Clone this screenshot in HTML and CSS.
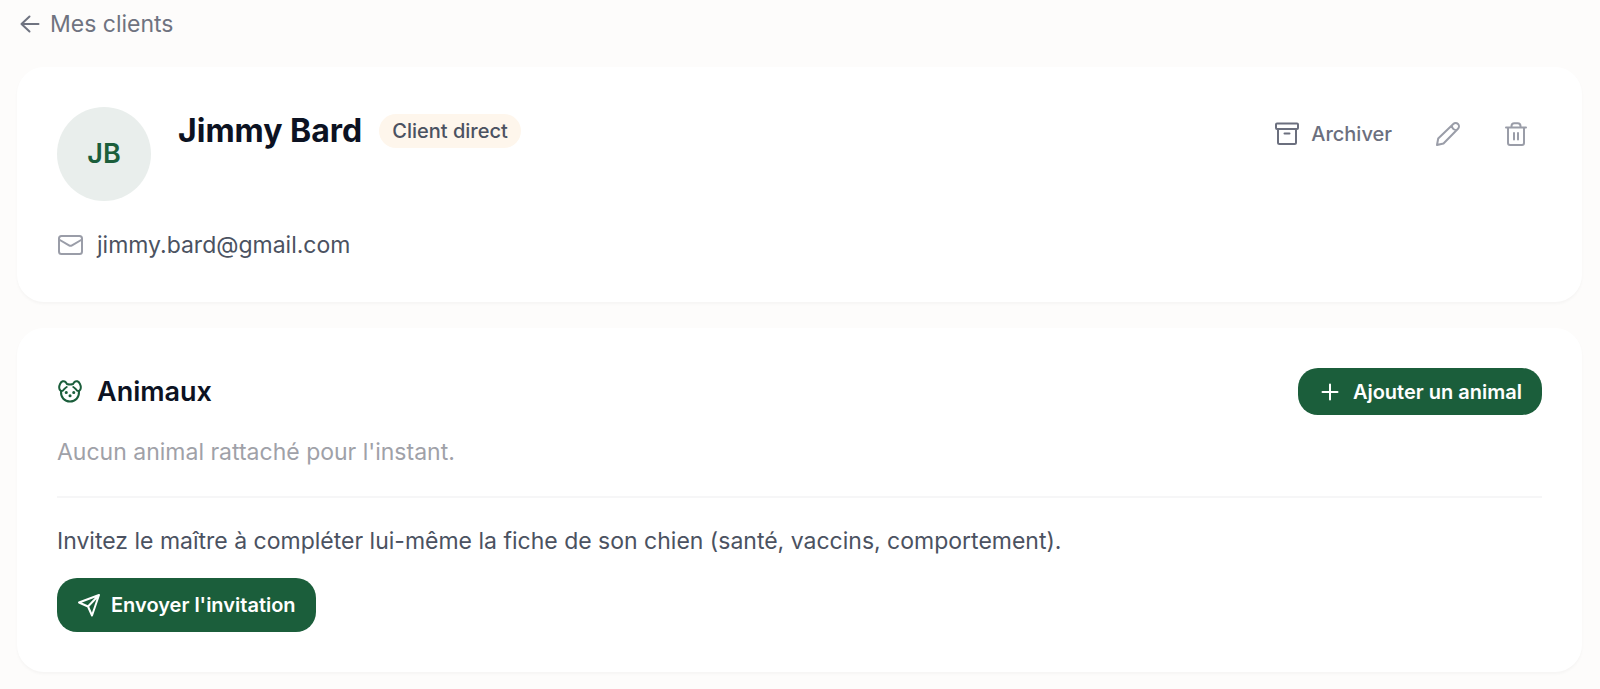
FILE: index.html
```html
<!DOCTYPE html>
<html lang="fr">
<head>
<meta charset="utf-8">
<meta name="viewport" content="width=device-width, initial-scale=1">
<title>Jimmy Bard – Mes clients</title>
<link rel="stylesheet" href="styles.css">
</head>
<body>
<main class="page">
  <nav class="breadcrumb">
    <a class="back-link" href="#clients">
      <svg class="icon icon-back" viewBox="0 0 20 20" aria-hidden="true"><path d="M9.500 17.500L1.500 10l8-7.500M1.500 10h17"/></svg>
      <span>Mes clients</span>
    </a>
  </nav>

  <section class="card">
    <header class="client-header">
      <div class="avatar">JB</div>
      <div class="identity">
        <h1 class="client-name">Jimmy Bard</h1>
        <span class="badge">Client direct</span>
      </div>
      <div class="actions">
        <button class="ghost-button" type="button">
          <svg class="icon icon-archive" viewBox="0 0 24 24" aria-hidden="true"><rect x="1" y="1.500" width="22" height="5.500" rx="1"/><path d="M3 7v13.500a1.500 1.500 0 0 0 1.500 1.500h15a1.500 1.500 0 0 0 1.500-1.500V7M9.500 11.500h5"/></svg>
          <span>Archiver</span>
        </button>
        <button class="icon-button" type="button" aria-label="Modifier">
          <svg class="icon" viewBox="0 0 24 24" aria-hidden="true"><path d="M1 23l1.200-6.500L17.300 2a3.200 3.200 0 0 1 4.700 4.700L7.500 21.500zM15.800 3.500c.3 2.700 2 4.400 4.700 4.700"/></svg>
        </button>
        <button class="icon-button" type="button" aria-label="Supprimer">
          <svg class="icon" viewBox="0 0 24 24" aria-hidden="true"><path d="M2 5.500h20M4 5.500v15.500a2 2 0 0 0 2 2h12a2 2 0 0 0 2-2v-15.500M7.500 5.500V4A2.800 2.800 0 0 1 10.300 1.200h3.400A2.800 2.800 0 0 1 16.500 4v1.500M10 11v6.500M14 11v6.500"/></svg>
        </button>
      </div>
    </header>
    <a class="contact" href="mailto:jimmy.bard@gmail.com">
      <svg class="icon icon-mail" viewBox="0 0 26 26" aria-hidden="true"><rect x="2" y="4" width="23" height="18" rx="2.500"/><path d="M2 7.500l10 5.900a3 3 0 0 0 3 0L25 7.500"/></svg>
      <span>jimmy.bard@gmail.com</span>
    </a>
  </section>

  <section class="card">
    <header class="section-header">
      <h2 class="section-title">
        <svg class="icon icon-dog" viewBox="0 0 26 26" aria-hidden="true"><path d="M10 5C9 3 7.500 1.800 5.700 2.300 3.500 3 2 6.500 2.200 8.800 2.400 11.500 4.500 12.800 6 11.500 7.300 10.300 8 9 9.700 8M16 5c1-2 2.500-3.200 4.300-2.700 2.200.7 3.700 4.200 3.500 6.500-.2 2.700-2.300 4-3.800 2.700-1.300-1.200-2-2.500-3.700-3.500M10 5c2 .7 4 .7 6 0M4 12.200c-.3 6.300 3.500 10.300 9 10.300s9.300-4 9-10.300"/><path class="dots" d="M9.200 13.500h.1M16.700 13.500h.1M13 16.800h.1"/></svg>
        Animaux
      </h2>
      <button class="primary-button add-button" type="button">
        <svg class="icon icon-plus" viewBox="0 0 18 18" aria-hidden="true"><path d="M9 1.500v15M1.500 9h15"/></svg>
        <span>Ajouter un animal</span>
      </button>
    </header>
    <p class="empty-text">Aucun animal rattaché pour l'instant.</p>
    <div class="invite">
      <p class="invite-text">Invitez le maître à compléter lui-même la fiche de son chien (santé, vaccins, comportement).</p>
      <button class="primary-button invite-button" type="button">
        <svg class="icon icon-send" viewBox="0 0 24 24" aria-hidden="true"><path d="M22 2L2 9.500l9 4 4 9zM22 2L11 13.500"/></svg>
        <span>Envoyer l'invitation</span>
      </button>
    </div>
  </section>
</main>
</body>
</html>
```

FILE: styles.css
```css
* {
  box-sizing: border-box;
}

body {
  margin: 0;
  background: #fdfcfb;
  color: #4b5261;
  font-family: Inter, "Liberation Sans", sans-serif;
  font-size: 23px;
  line-height: 34px;
}

h1,
h2,
p {
  margin: 0;
}

a {
  color: inherit;
  text-decoration: none;
}

button {
  border: 0;
  background: none;
  font: inherit;
  cursor: pointer;
}

.page {
  display: flex;
  flex-direction: column;
  gap: 26px;
  padding: 7px 18px 17px 17px;
}

.icon {
  flex: none;
  width: 24px;
  height: 24px;
  fill: none;
  stroke: currentColor;
  stroke-width: 2;
  stroke-linecap: round;
  stroke-linejoin: round;
}

.breadcrumb {
  display: flex;
}

.back-link {
  display: flex;
  align-items: center;
  gap: 10px;
  padding-left: 3px;
  color: #6f7380;
}

.icon-back {
  width: 20px;
  height: 20px;
}

.card {
  padding: 40px;
  border-radius: 27px;
  background: #fff;
  box-shadow: 0 2px 3px rgb(15 23 42 / 3%);
}

.client-header {
  display: flex;
  align-items: flex-start;
}

.avatar {
  display: grid;
  place-items: center;
  width: 94px;
  height: 94px;
  margin-right: 27px;
  border-radius: 50%;
  background: #e9eeec;
  color: #1b5e3b;
  font-size: 27px;
  font-weight: 600;
}

.identity {
  display: flex;
  flex: 1;
  flex-wrap: wrap;
  align-items: center;
  gap: 17px;
}

.client-name {
  color: #0c1222;
  font-size: 32px;
  font-weight: 700;
  line-height: 48px;
}

.badge {
  padding: 0 13px;
  border-radius: 17px;
  background: #fef6ec;
  font-size: 20px;
  font-weight: 500;
}

.actions {
  display: flex;
  gap: 16px;
}

.ghost-button,
.icon-button {
  display: flex;
  align-items: center;
  height: 54px;
  padding: 0 14px;
}

.ghost-button {
  gap: 12px;
  color: #6b6f7e;
  font-size: 20px;
  font-weight: 500;
}

.icon-button {
  color: #9a9da8;
}

.contact {
  display: flex;
  align-items: center;
  gap: 14px;
  margin-top: 27px;
}

.icon-mail {
  width: 26px;
  height: 26px;
  color: #9a9da8;
}

.section-header {
  display: flex;
  align-items: center;
  justify-content: space-between;
}

.section-title {
  display: flex;
  align-items: center;
  gap: 14px;
  color: #0c1222;
  font-size: 27px;
  font-weight: 600;
}

.icon-dog {
  width: 26px;
  height: 26px;
  color: #1b5e3b;
}

.dots {
  stroke-width: 3;
}

.primary-button {
  display: flex;
  align-items: center;
  border-radius: 20px;
  background: #1b5e3b;
  color: #fff;
  font-size: 20px;
  font-weight: 600;
}

.add-button {
  gap: 14px;
  height: 47px;
  padding: 0 20px 0 23px;
}

.icon-plus {
  width: 18px;
  height: 18px;
}

.empty-text {
  margin-top: 20px;
  color: #9fa1a8;
}

.invite {
  margin-top: 27px;
  padding-top: 26px;
  border-top: 2px solid #f6f6f7;
}

.invite-button {
  gap: 10px;
  height: 54px;
  margin-top: 20px;
  padding: 0 20px;
}
```
